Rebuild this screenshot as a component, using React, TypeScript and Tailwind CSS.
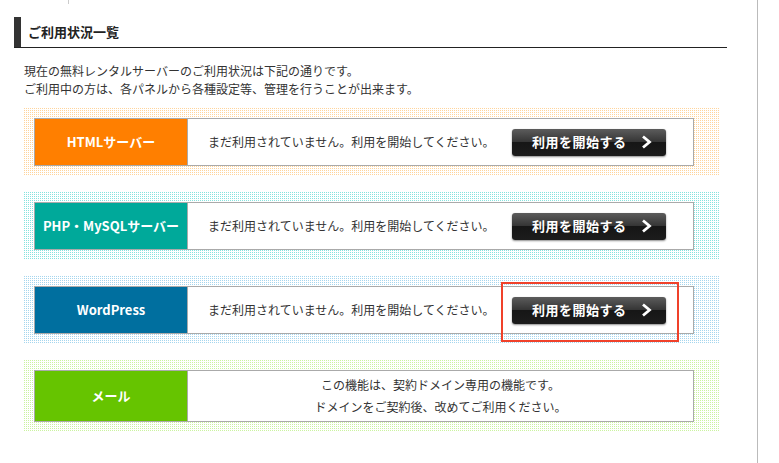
const services = [
  {
    name: "HTMLサーバー",
    label: "bg-[#ff7f00]",
    dots: "bg-[#ffd49b]",
    highlight: false,
  },
  {
    name: "PHP・MySQLサーバー",
    label: "bg-[#00a99a]",
    dots: "bg-[#86e3df]",
    highlight: false,
  },
  {
    name: "WordPress",
    label: "bg-[#006f9f]",
    dots: "bg-[#a6d6ee]",
    highlight: true,
  },
]

const dotted =
  "bg-[linear-gradient(90deg,transparent_1px,#fff_1px),linear-gradient(transparent_1px,#fff_1px)] bg-[length:2px_2px]"

function StartButton() {
  return (
    <button className="flex h-[27px] w-[154px] items-center rounded-[3px] bg-[linear-gradient(#5c5c5c,#333_50%,#161616_50%,#1c1c1c)] pl-[20px] pr-[14px] text-[13px] font-bold text-white shadow-[0_1px_2px_rgba(0,0,0,0.45)]">
      <span className="tracking-[0.5px]">利用を開始する</span>
      <svg className="ml-auto" width="11" height="14" viewBox="0 0 11 14">
        <polyline points="2,1.5 8.5,7 2,12.5" fill="none" stroke="#fff" strokeWidth="2.8" />
      </svg>
    </button>
  )
}

function ServiceRow({ s }: { s: (typeof services)[0] }) {
  return (
    <div className={`${s.dots} ${dotted} pb-[10px] pl-[10px] pr-[25px] pt-[10px]`}>
      <div className="flex h-[48px] border border-[#aaa] bg-white">
        <div className={`${s.label} flex w-[153px] items-center justify-center border-r border-[#aaa] text-[13px] font-bold text-white`}>
          {s.name}
        </div>
        <div className="flex flex-1 items-center pl-[20px] pr-[27px]">
          <p className="text-[12px] text-[#333]">まだ利用されていません。利用を開始してください。</p>
          <div className="relative ml-auto">
            <StartButton />
            {s.highlight && (
              <div className="absolute bottom-[-18px] left-[-11px] right-[-13px] top-[-15px] border-2 border-[#f0412a]" />
            )}
          </div>
        </div>
      </div>
    </div>
  )
}

export default function App() {
  return (
    <div className="relative flex h-[463px] w-[779px] overflow-hidden bg-white font-['Noto_Sans_CJK_JP','Liberation_Sans',sans-serif] text-[#333]">
      <div className="absolute left-[68px] top-0 h-[4px] w-px bg-[#ccc]" />
      <div className="w-[758px] border-r border-[#bbb] pt-[17px]">
        {/* 見出し */}
        <div className="ml-[14px] mr-[30px] flex h-[31px] border-b border-[#222]">
          <div className="w-[7px] bg-[#333]" />
          <h2 className="flex items-center pl-[7px] text-[13px] font-bold text-[#222]">ご利用状況一覧</h2>
        </div>

        <div className="ml-[24px] mt-[14px] text-[12px] leading-[18px]">
          <p>現在の無料レンタルサーバーのご利用状況は下記の通りです。</p>
          <p>ご利用中の方は、各パネルから各種設定等、管理を行うことが出来ます。</p>
        </div>

        <div className="ml-[24px] mt-[10px] flex w-[695px] flex-col gap-[16px]">
          {services.map((s) => (
            <ServiceRow key={s.name} s={s} />
          ))}

          {/* メール */}
          <div className={`bg-[#cbf3a0] ${dotted} pb-[9px] pl-[10px] pr-[25px] pt-[10px]`}>
            <div className="flex h-[52px] border border-[#aaa] bg-white">
              <div className="flex w-[153px] items-center justify-center border-r border-[#aaa] bg-[#66c400] text-[13px] font-bold text-white">
                メール
              </div>
              <div className="flex flex-1 flex-col items-center justify-center text-[12px] leading-[22px] text-[#333]">
                <p>この機能は、契約ドメイン専用の機能です。</p>
                <p>ドメインをご契約後、改めてご利用ください。</p>
              </div>
            </div>
          </div>
        </div>
      </div>
    </div>
  )
}
